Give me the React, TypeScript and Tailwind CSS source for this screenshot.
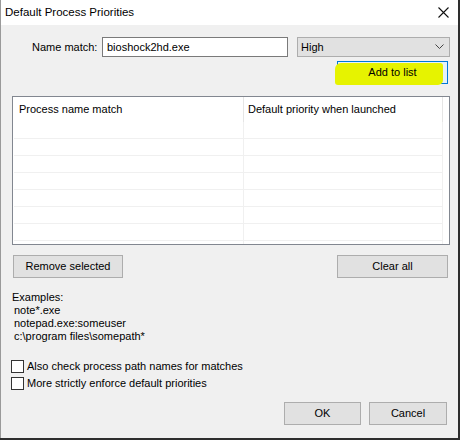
import React from "react";

const font = { fontFamily: '"Liberation Sans", Arial, sans-serif' };

const WinButton: React.FC<{ label: string; className?: string }> = ({ label, className }) => (
  <button
    className={`h-[23px] bg-[#e1e1e1] border border-[#adadad] text-[11px] text-black flex items-center justify-center ${className ?? ""}`}
  >
    {label}
  </button>
);

const Checkbox: React.FC<{ label: string }> = ({ label }) => (
  <label className="h-[17px] flex items-center gap-[3px] pl-[10px]">
    <span className="w-[13px] h-[13px] border border-[#333] bg-white" />
    <span>{label}</span>
  </label>
);

const rows = [0, 1, 2, 3, 4, 5, 6];

export default function App() {
  return (
    <div className="w-[460px] h-[440px] bg-[#2e2e2e]" style={font}>
      <div className="w-[458px] h-[438px] bg-[#f0f0f0] border-l border-[#9a9a9a] flex flex-col text-[11px] text-black">
        {/* title bar */}
        <div className="h-[25px] bg-white flex items-center justify-between pl-[4px] pr-[9px]">
          <span className="text-[11.5px]">Default Process Priorities</span>
          <svg width="11" height="11" viewBox="0 0 11 11">
            <path d="M0.5 0.5L10.5 10.5M10.5 0.5L0.5 10.5" stroke="#111" strokeWidth="1.1" />
          </svg>
        </div>

        {/* name match row */}
        <div className="mt-[12px] flex items-center h-[20px]">
          <span className="pl-[31px] w-[101px]">Name match:</span>
          <div className="w-[186px] h-[20px] bg-white border border-[#7a7a7a] flex items-center pl-[4px]">
            bioshock2hd.exe
          </div>
          <div className="ml-[9px] w-[153px] h-[20px] bg-[#e1e1e1] border border-[#adadad] flex items-center justify-between pl-[3px] pr-[5px]">
            <span>High</span>
            <svg width="9" height="6" viewBox="0 0 9 6">
              <path d="M0.5 0.5L4.5 4.5L8.5 0.5" fill="none" stroke="#444" strokeWidth="1" />
            </svg>
          </div>
        </div>

        {/* add to list */}
        <div className="mt-[4px] pl-[336px]">
          <button className="relative w-[111px] h-[23px] bg-[#e5f1fb] border border-[#0078d7] flex items-center justify-center text-[11px] text-black">
            <span className="absolute left-[-3px] top-[1px] w-[108px] h-[22px] bg-[#e6f300] rounded-[3px] rounded-tl-[6px] rounded-br-[5px]" />
            <span className="relative">Add to list</span>
          </button>
        </div>

        {/* process list */}
        <div className="mt-[12px] ml-[11px] w-[438px] h-[149px] bg-white border border-[#828790] overflow-hidden">
          <div className="h-[25px] flex">
            <div className="w-[231px] border-r border-[#e5e5e5] flex items-center pl-[6px]">Process name match</div>
            <div className="w-[199px] border-r border-[#e5e5e5] flex items-center pl-[4px]">Default priority when launched</div>
          </div>
          {rows.map((r) => (
            <div key={r} className="h-[17px] flex pl-[1px]">
              <div className="w-[230px] border-r border-b border-[#f0f0f0]" />
              <div className="w-[199px] border-r border-b border-[#f0f0f0]" />
            </div>
          ))}
          <div className="h-[6px] flex pl-[1px]">
            <div className="w-[230px] border-r border-[#f0f0f0]" />
            <div className="w-[199px] border-r border-[#f0f0f0]" />
          </div>
        </div>

        {/* remove / clear */}
        <div className="mt-[10px] flex justify-between pl-[12px] pr-[10px]">
          <WinButton label="Remove selected" className="w-[110px]" />
          <WinButton label="Clear all" className="w-[111px]" />
        </div>

        {/* examples */}
        <div className="mt-[13px] pl-[11px] leading-[13px]">
          <div>Examples:</div>
          <div className="pl-[2px]">note*.exe</div>
          <div className="pl-[2px]">notepad.exe:someuser</div>
          <div className="pl-[2px]">c:\program files\somepath*</div>
        </div>

        {/* options */}
        <div className="mt-[15px] flex flex-col">
          <Checkbox label="Also check process path names for matches" />
          <Checkbox label="More strictly enforce default priorities" />
        </div>

        {/* ok / cancel */}
        <div className="mt-[10px] flex justify-end gap-[8px] pr-[11px]">
          <WinButton label="OK" className="w-[77px]" />
          <WinButton label="Cancel" className="w-[78px]" />
        </div>
      </div>
    </div>
  );
}
